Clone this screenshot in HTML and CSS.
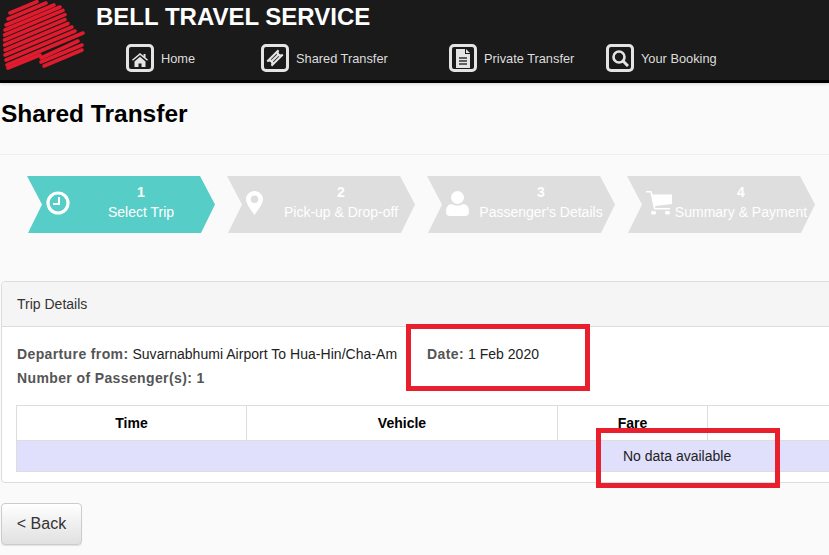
FILE: index.html
```html
<!DOCTYPE html>
<html>
<head>
    <title>Shared Transfer</title>
    <link rel="stylesheet" href="styles.css">
</head>
<body>
    <div class="header">
        <svg class="logo" width="96" height="80" viewBox="0 0 96 80">
            <g stroke="#e01b2d" stroke-width="3.6" stroke-linecap="round" fill="none">
                <path d="M10 13L37 1.700"/>
                <path d="M8 19L46 3"/>
                <path d="M6 25L54 5"/>
                <path d="M5 30L60 7"/>
                <path d="M4.500 35L63 10.400"/>
                <path d="M4.500 40L65 14.600"/>
                <path d="M4.500 45L65 19.600"/>
                <path d="M5 50L68 23.500"/>
                <path d="M5 55L72 27"/>
                <path d="M6 60L75 31"/>
                <path d="M7 65L83 33"/>
                <path d="M8 68L40 55"/>
                <path d="M41 58L78 41"/>
                <path d="M41 62L82 45"/>
                <path d="M44 66L82 50"/>
            </g>
        </svg>
        <div class="header-main">
            <div class="brand">BELL TRAVEL SERVICE</div>
            <div class="nav">
                <a class="nav-item">
                    <span class="nav-icon icon-low">
                        <svg width="16" height="14" viewBox="0 0 16 14"><path fill="#e4e4e4" d="M8 0L0 6.800l.9 1L8 2l7.100 5.800.9-1-2.500-2.200V1h-2v1.900zM2.500 8.500V14h4v-3.500h3V14h4V8.500L8 3.800z"/></svg>
                    </span>
                    Home
                </a>
                <a class="nav-item">
                    <span class="nav-icon">
                        <svg width="18" height="18" viewBox="0 0 18 18"><g transform="rotate(-45 9 9)"><path fill="#e4e4e4" d="M1 5h16v2a2 2 0 0 0 0 4v2H1v-2a2 2 0 0 0 0-4z"/><path stroke="#333" stroke-width="1" d="M5 7.500h8M5 10.500h8"/></g></svg>
                    </span>
                    Shared Transfer
                </a>
                <a class="nav-item">
                    <span class="nav-icon">
                        <svg width="16" height="19" viewBox="0 0 16 19"><path fill="#e4e4e4" d="M1 0h9v5h5v14H1z"/><path fill="#e4e4e4" d="M11 0l4 4h-4z"/><path stroke="#333" stroke-width="1.300" d="M4 9h8M4 12h8M4 15h8"/></svg>
                    </span>
                    Private Transfer
                </a>
                <a class="nav-item">
                    <span class="nav-icon">
                        <svg width="18" height="18" viewBox="0 0 18 18"><circle cx="8" cy="8" r="5.500" fill="none" stroke="#e4e4e4" stroke-width="2.600"/><path stroke="#e4e4e4" stroke-width="3" d="M12 12l5 5"/></svg>
                    </span>
                    Your Booking
                </a>
            </div>
        </div>
    </div>

    <h1 class="page-title">Shared Transfer</h1>
    <hr class="divider">

    <div class="steps">
        <div class="step active">
            <span class="step-icon">
                <svg width="24" height="24" viewBox="0 0 24 24"><circle cx="12" cy="12" r="10" fill="none" stroke="#fff" stroke-width="3.200"/><path fill="none" stroke="#fff" stroke-width="2" d="M13 6v7H7"/></svg>
            </span>
            <div class="step-text"><b>1</b>Select Trip</div>
        </div>
        <div class="step">
            <span class="step-icon">
                <svg width="17" height="24" viewBox="0 0 17 24"><path fill="#fff" fill-rule="evenodd" d="M8.500 0C3.800 0 0 3.700 0 8.300 0 13 5 19 8.500 24 12 19 17 13 17 8.300 17 3.700 13.200 0 8.500 0zm0 4.500a3.800 3.800 0 1 1 0 7.600 3.800 3.800 0 0 1 0-7.600z"/></svg>
            </span>
            <div class="step-text"><b>2</b>Pick-up &amp; Drop-off</div>
        </div>
        <div class="step">
            <span class="step-icon">
                <svg width="23" height="25" viewBox="0 0 23 25"><circle cx="11.500" cy="6.500" r="6.500" fill="#fff"/><path fill="#fff" d="M0 21c0-5 2-8 6-8 3 2 8 2 11 0 4 0 6 3 6 8 0 3-2 4-4 4H4c-2 0-4-1-4-4z"/></svg>
            </span>
            <div class="step-text"><b>3</b>Passenger's Details</div>
        </div>
        <div class="step">
            <span class="step-icon">
                <svg width="26" height="25" viewBox="0 0 26 25"><path fill="#fff" d="M0 0h5.500l1.200 3.500H26v9.500L9 15l.4 2H24v1.500H8L4.400 1.500H0z"/><rect x="5" y="20" width="5" height="3.500" rx="1.500" fill="#fff"/><rect x="19" y="20" width="5" height="3.500" rx="1.500" fill="#fff"/></svg>
            </span>
            <div class="step-text"><b>4</b>Summary &amp; Payment</div>
        </div>
    </div>

    <div class="panel">
        <div class="panel-heading">Trip Details</div>
        <div class="panel-body">
            <div class="trip-line">
                <span class="trip-from"><b>Departure from:</b> Suvarnabhumi Airport To Hua-Hin/Cha-Am</span>
                <span><b>Date:</b> 1 Feb 2020</span>
            </div>
            <div class="trip-line"><span><b>Number of Passenger(s): 1</b></span></div>
            <table class="trip-table">
                <colgroup>
                    <col class="col-time">
                    <col class="col-vehicle">
                    <col class="col-fare">
                    <col class="col-action">
                </colgroup>
                <tr>
                    <th>Time</th>
                    <th>Vehicle</th>
                    <th>Fare</th>
                    <th></th>
                </tr>
                <tr>
                    <td colspan="4">No data available</td>
                </tr>
            </table>
        </div>
    </div>

    <button class="back-btn">&lt; Back</button>

    <div class="mark mark-date"></div>
    <div class="mark mark-nodata"></div>
</body>
</html>
```

FILE: styles.css
```css
html, body {
    height: 555px;
    overflow: hidden;
}

body {
    position: relative;
    margin: 0;
    background: #fafafa;
    font-family: "Liberation Sans", Arial, sans-serif;
    font-size: 14px;
    color: #333;
}

.header {
    display: flex;
    height: 80px;
    background: #1a1a1a;
    border-bottom: 3px solid #000;
    box-shadow: 0 1px 3px rgba(0, 0, 0, 0.15);
}

.logo {
    flex: none;
}

.brand {
    padding-top: 3px;
    font-size: 24px;
    line-height: 27px;
    font-weight: bold;
    color: #fff;
}

.nav {
    display: grid;
    grid-template-columns: 135px 188px 157px auto;
    margin-top: 14px;
    padding-left: 30px;
}

.nav-item {
    display: flex;
    align-items: center;
    gap: 7px;
    font-size: 12.8px;
    color: #ddd;
}

.nav-icon {
    display: flex;
    align-items: center;
    justify-content: center;
    box-sizing: border-box;
    width: 28px;
    height: 28px;
    border: 3px solid #e4e4e4;
    border-radius: 5px;
}

.icon-low {
    padding-top: 3px;
}

.page-title {
    margin: 0;
    padding: 17px 0 0 1px;
    font-size: 24.5px;
    line-height: 28px;
    color: #000;
}

.divider {
    margin: 26px 0 0;
    border: 0;
    border-top: 1px solid #eee;
}

.steps {
    display: flex;
    gap: 12px;
    margin: 21px 0 0 27px;
}

.step {
    display: flex;
    flex: none;
    align-items: center;
    box-sizing: border-box;
    width: 188px;
    height: 57px;
    padding: 0 5px 0 19px;
    background: #dedede;
    color: #fff;
    clip-path: polygon(0 0, 173px 0, 188px 50%, 174px 100%, 1px 100%, 15px 50%);
}

.step.active {
    background: #57cdc8;
}

.step-icon {
    display: flex;
    flex: none;
    width: 26px;
    margin-bottom: 3px;
}

.step-text {
    flex: 1;
    padding-bottom: 6px;
    text-align: center;
    white-space: nowrap;
    line-height: 20px;
}

.step-text b {
    display: block;
}

.panel {
    width: 860px;
    margin: 48px 0 0 1px;
    background: #fff;
    border: 1px solid #ddd;
    border-radius: 4px;
}

.panel-heading {
    height: 44px;
    padding-left: 15px;
    background: #f5f5f5;
    border-bottom: 1px solid #ddd;
    border-radius: 4px 4px 0 0;
    line-height: 44px;
}

.panel-body {
    padding: 16px 15px 10px;
}

.trip-line {
    display: flex;
    gap: 30px;
    height: 24px;
    line-height: 22px;
    color: #222;
    letter-spacing: 0.03px;
}

.trip-line b {
    color: #555;
    letter-spacing: 0.38px;
}

.trip-table {
    width: 845px;
    margin: 14px 0 0 -1px;
    border-collapse: collapse;
    table-layout: fixed;
}

.col-time { width: 230px; }
.col-vehicle { width: 311px; }
.col-fare { width: 150px; }

.trip-table th {
    height: 34px;
    padding: 0;
    border: 1px solid #ddd;
    background: #fff;
    color: #000;
}

.trip-table td {
    height: 30px;
    padding: 0 0 0 606px;
    border: 1px solid #ddd;
    background: #e0e0fc;
    color: #222;
}

.back-btn {
    display: block;
    width: 81px;
    height: 42px;
    margin: 20px 0 0 1px;
    padding: 0;
    background: linear-gradient(#fff, #e0e0e0);
    border: 1px solid #ccc;
    border-radius: 4px;
    box-shadow: 0 1px 1px rgba(0, 0, 0, 0.1);
    font-family: inherit;
    font-size: 16px;
    color: #333;
}

/* red boxes drawn over the page */
.mark {
    position: absolute;
    box-sizing: border-box;
    border: 5px solid #e8202d;
}

.mark-date {
    left: 406px;
    top: 324px;
    width: 184px;
    height: 67px;
}

.mark-nodata {
    left: 596px;
    top: 428px;
    width: 184px;
    height: 60px;
}
```
